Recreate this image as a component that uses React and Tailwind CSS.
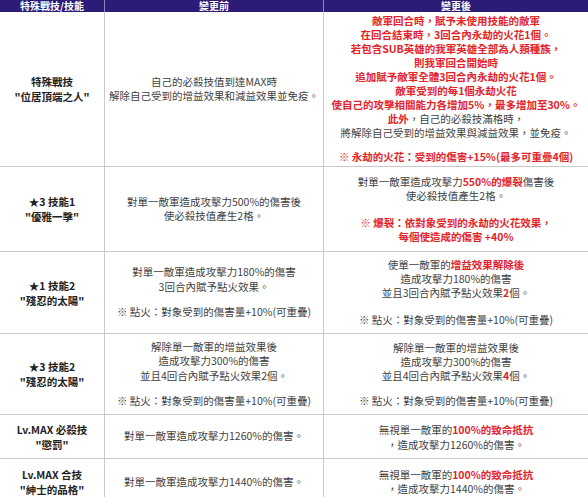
import React from "react";

const R = ({ children }) => <span className="font-bold text-[#e3242b]">{children}</span>;
const Gap = ({ h = "h-[11px]" }) => <div className={h} />;

function Row({ h, c1, c2, c3, last }) {
  return (
    <div className={`grid grid-cols-[105px_219px_1fr] ${h} ${last ? "" : "border-b border-[#c9c9c9]"}`}>
      <div className="flex flex-col items-center justify-center border-r border-[#c9c9c9] text-center font-bold text-[#222] leading-[15px] whitespace-nowrap">
        {c1}
      </div>
      <div className="flex flex-col items-center justify-center border-r border-[#c9c9c9] text-center text-[#3f3f3f] leading-[14.5px] whitespace-nowrap overflow-visible">
        {c2}
      </div>
      <div className="flex flex-col items-center justify-center text-center text-[#3f3f3f] leading-[14px] whitespace-nowrap">
        {c3}
      </div>
    </div>
  );
}

export default function App() {
  return (
    <div
      className="w-[588px] h-[497px] overflow-hidden bg-white text-[10.5px]"
      style={{ fontFamily: '"Noto Sans CJK TC", "Noto Sans", sans-serif' }}
    >
      <div className="grid grid-cols-[105px_219px_1fr] h-[12px] bg-[#2c1b77] text-white font-bold text-[10px]">
        <div className="flex justify-center border-r border-[#8f86b8] leading-[12px]">特殊戰技/技能</div>
        <div className="flex justify-center border-r border-[#8f86b8] leading-[12px]">變更前</div>
        <div className="flex justify-center leading-[12px]">變更後</div>
      </div>

      <Row
        h="h-[155px]"
        c1={<><div>特殊戰技</div><div>"位居頂端之人"</div></>}
        c2={<><div>自己的必殺技值到達MAX時</div><div>解除自己受到的增益效果和減益效果並免疫。</div></>}
        c3={
          <>
            <div><R>敵軍回合時，賦予未使用技能的敵軍</R></div>
            <div><R>在回合結束時，3回合內永劫的火花1個。</R></div>
            <div><R>若包含SUB英雄的我軍英雄全部為人類種族，</R></div>
            <div><R>則我軍回合開始時</R></div>
            <div><R>追加賦予敵軍全體3回合內永劫的火花1個。</R></div>
            <div><R>敵軍受到的每1個永劫火花</R></div>
            <div><R>使自己的攻擊相關能力各增加5%，最多增加至30%。</R></div>
            <div><R>此外</R>，自己的必殺技滿格時，</div>
            <div>將解除自己受到的增益效果與減益效果，並免疫。</div>
            <Gap h="h-[10px]" />
            <div><R>※ 永劫的火花：受到的傷害+15%(最多可重疊4個)</R></div>
          </>
        }
      />

      <Row
        h="h-[85px]"
        c1={<><div>★3 技能1</div><div>"優雅一擊"</div></>}
        c2={<><div>對單一敵軍造成攻擊力500%的傷害後</div><div>使必殺技值產生2格。</div></>}
        c3={
          <>
            <div>對單一敵軍造成攻擊力<R>550%的爆裂</R>傷害後</div>
            <div>使必殺技值產生2格。</div>
            <Gap h="h-[13px]" />
            <div><R>※ 爆裂：依對象受到的永劫的火花效果，</R></div>
            <div><R>每個使造成的傷害 +40%</R></div>
          </>
        }
      />

      <Row
        h="h-[82px]"
        c1={<><div>★1 技能2</div><div>"殘忍的太陽"</div></>}
        c2={
          <>
            <div>對單一敵軍造成攻擊力180%的傷害</div>
            <div>3回合內賦予點火效果。</div>
            <Gap h="h-[11px]" />
            <div>※ 點火：對象受到的傷害量+10%(可重疊)</div>
          </>
        }
        c3={
          <>
            <div>使單一敵軍的<R>增益效果解除後</R></div>
            <div>造成攻擊力180%的傷害</div>
            <div>並且3回合內賦予點火效果<R>2</R>個。</div>
            <Gap h="h-[13px]" />
            <div>※ 點火：對象受到的傷害量+10%(可重疊)</div>
          </>
        }
      />

      <Row
        h="h-[81px]"
        c1={<><div>★3 技能2</div><div>"殘忍的太陽"</div></>}
        c2={
          <>
            <div>解除單一敵軍的增益效果後</div>
            <div>造成攻擊力300%的傷害</div>
            <div>並且4回合內賦予點火效果2個。</div>
            <Gap h="h-[11px]" />
            <div>※ 點火：對象受到的傷害量+10%(可重疊)</div>
          </>
        }
        c3={
          <>
            <div>解除單一敵軍的增益效果後</div>
            <div>造成攻擊力300%的傷害</div>
            <div>並且4回合內賦予點火效果<R>4</R>個。</div>
            <Gap h="h-[11px]" />
            <div>※ 點火：對象受到的傷害量+10%(可重疊)</div>
          </>
        }
      />

      <Row
        h="h-[44px]"
        c1={<><div>Lv.MAX 必殺技</div><div>"懲罰"</div></>}
        c2={<div>對單一敵軍造成攻擊力1260%的傷害。</div>}
        c3={
          <>
            <div className="leading-[15px]">無視單一敵軍的<R>100%的致命抵抗</R></div>
            <div className="leading-[15px]">，造成攻擊力1260%的傷害。</div>
          </>
        }
      />

      <Row
        h="h-[46px]"
        last
        c1={<><div>Lv.MAX 合技</div><div>"紳士的品格"</div></>}
        c2={<div>對單一敵軍造成攻擊力1440%的傷害。</div>}
        c3={
          <>
            <div className="leading-[14px]">無視單一敵軍的<R>100%的致命抵抗</R></div>
            <div className="leading-[14px]">，造成攻擊力1440%的傷害。</div>
          </>
        }
      />
    </div>
  );
}
